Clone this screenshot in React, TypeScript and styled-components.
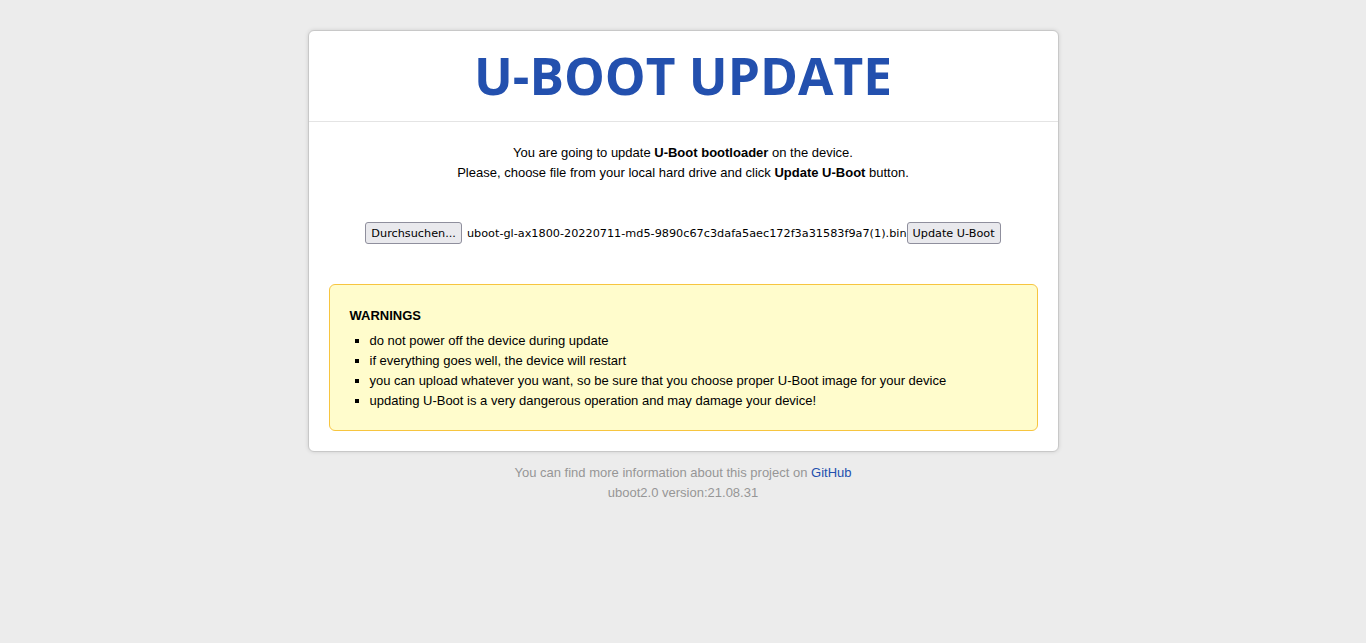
import * as React from 'react';
import styled, { createGlobalStyle } from 'styled-components';

const GlobalStyle = createGlobalStyle`
  html, body {
    margin: 0;
    padding: 0;
    background: #ececec;
    font-family: "Liberation Sans", Arial, sans-serif;
    font-size: 13px;
    color: #000;
  }
`;

const Card = styled.div`
  box-sizing: border-box;
  width: 751px;
  margin: 30px auto 0;
  background: #fff;
  border: 1px solid #c8c8c8;
  border-radius: 6px;
  box-shadow: 0 0 4px rgba(0, 0, 0, 0.12);
`;

const Header = styled.div`
  height: 90px;
  display: flex;
  align-items: center;
  justify-content: center;
  border-bottom: 1px solid #e4e4e4;
`;

const Title = styled.h1`
  margin: 0;
  font-family: "Open Sans", "Noto Sans", sans-serif;
  font-weight: 700;
  font-size: 51.4px;
  color: #2350ae;
  line-height: 1;
`;

const Intro = styled.p`
  margin: 0;
  padding: 21px 20px 0;
  text-align: center;
  line-height: 20px;
`;

const UploadRow = styled.div`
  display: flex;
  justify-content: center;
  align-items: center;
  margin-top: 39px;
  height: 22px;
  font-family: "DejaVu Sans", Verdana, sans-serif;
  font-size: 11.25px;
`;

const NativeButton = styled.button`
  font-family: "DejaVu Sans", Verdana, sans-serif;
  font-size: 11.25px;
  height: 22px;
  padding: 0 5px;
  color: #000;
  background: #e9e9ed;
  border: 1px solid #8f8f9d;
  border-radius: 3px;
`;

const FileName = styled.span`
  margin-left: 5px;
`;

const Warnings = styled.div`
  margin: 40px 20px 20px;
  padding: 21px 20px 19px;
  background: #fffccc;
  border: 1px solid #f7c53f;
  border-radius: 6px;
`;

const WarnTitle = styled.div`
  font-weight: 700;
  line-height: 20px;
  margin-bottom: 5px;
`;

const List = styled.ul`
  margin: 0;
  padding-left: 20px;
  list-style: square;
  line-height: 20px;
`;

const Footer = styled.div`
  margin-top: 11px;
  text-align: center;
  color: #969696;
  line-height: 20px;
`;

const Link = styled.a`
  color: #2350ae;
  text-decoration: none;
`;

const App: React.FunctionComponent = () => {
  return (
    <>
      <GlobalStyle />
      <Card>
        <Header>
          <Title>U-BOOT UPDATE</Title>
        </Header>
        <Intro>
          You are going to update <b>U-Boot bootloader</b> on the device.
          <br />
          Please, choose file from your local hard drive and click <b>Update U-Boot</b> button.
        </Intro>
        <UploadRow>
          <NativeButton>Durchsuchen...</NativeButton>
          <FileName>uboot-gl-ax1800-20220711-md5-9890c67c3dafa5aec172f3a31583f9a7(1).bin</FileName>
          <NativeButton>Update U-Boot</NativeButton>
        </UploadRow>
        <Warnings>
          <WarnTitle>WARNINGS</WarnTitle>
          <List>
            <li>do not power off the device during update</li>
            <li>if everything goes well, the device will restart</li>
            <li>you can upload whatever you want, so be sure that you choose proper U-Boot image for your device</li>
            <li>updating U-Boot is a very dangerous operation and may damage your device!</li>
          </List>
        </Warnings>
      </Card>
      <Footer>
        You can find more information about this project on <Link href="#">GitHub</Link>
        <br />
        uboot2.0 version:21.08.31
      </Footer>
    </>
  );
};

export default App;
